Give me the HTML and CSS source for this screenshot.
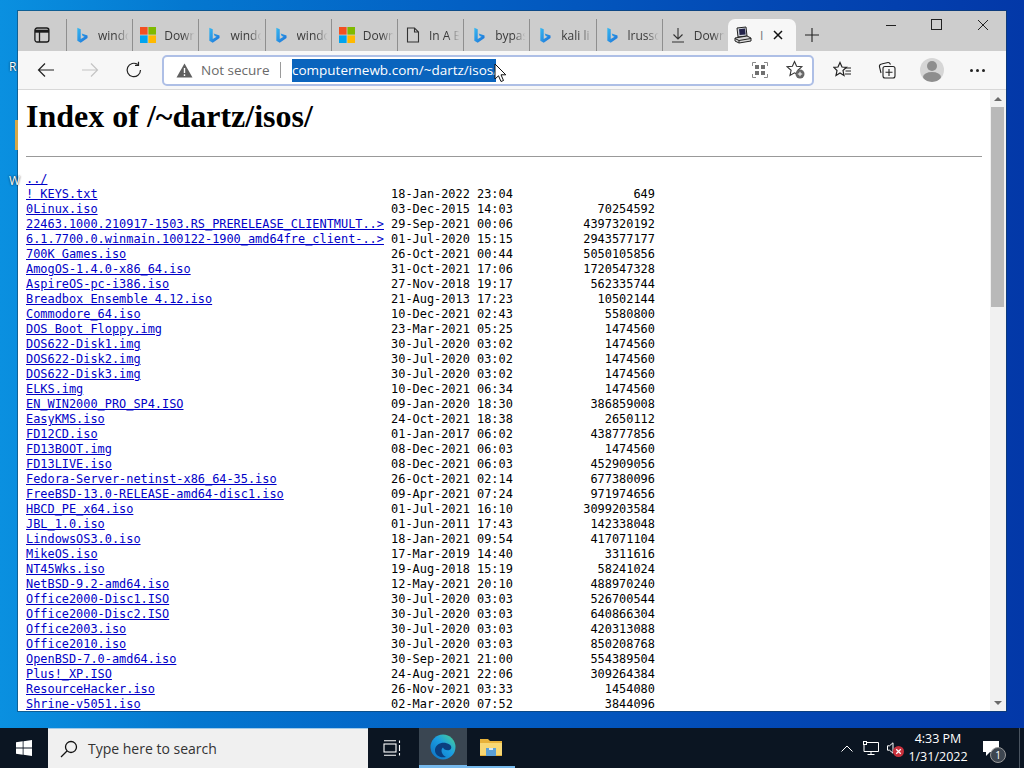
FILE: index.html
```html
<!DOCTYPE html>
<html lang="en">
<head>
<meta charset="utf-8">
<title>Index of /~dartz/isos/</title>
<link rel="stylesheet" href="styles.css">
</head>
<body>
<svg class="defs" width="0" height="0" aria-hidden="true">
  <defs>
    <linearGradient id="bingG" x1="0" y1="0" x2="1" y2="1"><stop offset="0" stop-color="#37b8f0"/><stop offset="1" stop-color="#1a6fd8"/></linearGradient>
    <linearGradient id="edgeG" x1="0" y1="1" x2="1" y2="0"><stop offset="0" stop-color="#0c6fc0"/><stop offset=".55" stop-color="#1b9de2"/><stop offset="1" stop-color="#4fd68a"/></linearGradient>
    <symbol id="bing" viewBox="0 0 16 20">
      <path d="M2.5 1 6.5 2.5V14L11 11.5 8.8 10.5 7.6 7.5 14.5 10V13L6.5 18.5 2.5 16.3Z" fill="url(#bingG)"/>
    </symbol>
    <symbol id="ms" viewBox="0 0 16 16">
      <rect width="7.6" height="7.6" fill="#f25022"/><rect x="8.4" width="7.6" height="7.6" fill="#7fba00"/>
      <rect y="8.4" width="7.6" height="7.6" fill="#00a4ef"/><rect x="8.4" y="8.4" width="7.6" height="7.6" fill="#ffb900"/>
    </symbol>
  </defs>
</svg>

<div class="desktop">
  <span class="deskicon deskicon-r">R</span>
  <span class="deskicon deskicon-w">W</span>
  <span class="deskfolder"></span>

  <div class="window">
    <div class="tabstrip">
      <div class="vtabs">
        <svg width="16" height="16" viewBox="0 0 16 16" fill="none" stroke="#1a1a1a" stroke-width="1.3"><rect x=".9" y="1" width="14" height="14" rx="2.2"/><path d="M1 4.2H15" stroke-width="3"/><path d="M5.5 5V15"/></svg>
      </div>
      <div class="tab"><svg class="fav" width="13" height="17"><use href="#bing"/></svg><span class="tab-label">windo</span></div>
      <div class="tab"><svg class="fav" width="16" height="16"><use href="#ms"/></svg><span class="tab-label">Down</span></div>
      <div class="tab"><svg class="fav" width="13" height="17"><use href="#bing"/></svg><span class="tab-label">windo</span></div>
      <div class="tab"><svg class="fav" width="13" height="17"><use href="#bing"/></svg><span class="tab-label">windo</span></div>
      <div class="tab"><svg class="fav" width="16" height="16"><use href="#ms"/></svg><span class="tab-label">Down</span></div>
      <div class="tab"><svg class="fav" width="13" height="16" viewBox="0 0 13 16" fill="none" stroke="#333" stroke-width="1.1"><path d="M1 1H8L12 5V15H1ZM8 1V5H12"/></svg><span class="tab-label">In A B</span></div>
      <div class="tab"><svg class="fav" width="13" height="17"><use href="#bing"/></svg><span class="tab-label">bypas</span></div>
      <div class="tab"><svg class="fav" width="13" height="17"><use href="#bing"/></svg><span class="tab-label">kali li</span></div>
      <div class="tab"><svg class="fav" width="13" height="17"><use href="#bing"/></svg><span class="tab-label">lrusso</span></div>
      <div class="tab"><svg class="fav" width="14" height="16" viewBox="0 0 14 16" fill="none" stroke="#333" stroke-width="1.1"><path d="M7 1V12M2.5 7.5 7 12l4.500-4.500M1 15H13"/></svg><span class="tab-label">Down</span></div>
      <div class="tab-active">
        <svg class="fav-pc" width="18" height="18" viewBox="0 0 18 18"><path d="M3 2 12 1 13 10 4 11Z" fill="#cfd3d8" stroke="#222"/><path d="M5 3.200 11 2.600 11.600 8.500 5.600 9Z" fill="#23234a"/><path d="M1 12 13 10 17 12 17 15 5 17 1 15Z" fill="#d8d8d8" stroke="#222"/><path d="M1 12.500 5 14.500 17 12.500M5 14.500V17" stroke="#222" fill="none"/></svg>
        <span class="tab-active-label">I</span>
        <svg class="tab-close" width="10" height="10" viewBox="0 0 10 10" stroke="#111" stroke-width="1.500"><path d="M1 1 9 9M9 1 1 9"/></svg>
      </div>
      <div class="newtab"><svg width="16" height="16" viewBox="0 0 16 16" stroke="#222" stroke-width="1.100"><path d="M8 1V15M1 8H15"/></svg></div>
      <div class="winctl">
        <svg width="12" height="12" viewBox="0 0 12 12" stroke="#222" stroke-width="1"><path d="M1 6.500H11"/></svg>
        <svg width="12" height="12" viewBox="0 0 12 12" fill="none" stroke="#222" stroke-width="1"><rect x=".5" y=".5" width="10" height="10"/></svg>
        <svg width="12" height="12" viewBox="0 0 12 12" stroke="#222" stroke-width="1"><path d="M1 1 11 11M11 1 1 11"/></svg>
      </div>
    </div>

    <div class="toolbar">
      <div class="navbtn nav-back"><svg width="18" height="16" viewBox="0 0 18 16" fill="none" stroke="#222" stroke-width="1.200"><path d="M17 8H1.500M8 1.500 1.500 8 8 14.500"/></svg></div>
      <div class="navbtn nav-fwd"><svg width="18" height="16" viewBox="0 0 18 16" fill="none" stroke="#c4c4c4" stroke-width="1.200"><path d="M1 8H16.500M10 1.500 16.500 8 10 14.500"/></svg></div>
      <div class="navbtn nav-reload"><svg width="18" height="18" viewBox="0 0 18 18" fill="none" stroke="#222" stroke-width="1.200"><path d="M15.500 9A6.700 6.700 0 1 1 12.800 3.600"/><path d="M13.500 .8V4.300H10"/></svg></div>
      <div class="omnibox">
        <svg class="warn" width="17" height="15" viewBox="0 0 17 15"><path d="M8.500 .5 16.500 14.500H.5Z" fill="#5f5f5f"/><path d="M8.500 5V10M8.500 11.300V13" stroke="#fff" stroke-width="1.400"/></svg>
        <span class="notsecure">Not secure</span>
        <span class="omnisep"></span>
        <span class="url">computernewb.com/~dartz/isos/</span>
        <svg class="omni-grid" width="16" height="16" viewBox="0 0 16 16" fill="#707070"><path d="M.5 4V.5H4M12 .5H15.500V4M15.500 12V15.500H12M4 15.500H.5V12" fill="none" stroke="#8a8a8a"/><rect x="3" y="3" width="4" height="4"/><rect x="9" y="3" width="4" height="4"/><rect x="3" y="9" width="4" height="4"/><rect x="9" y="9" width="4" height="4"/></svg>
        <svg class="omni-star" width="20" height="20" viewBox="0 0 20 20" fill="none"><path d="M8.500 1.500 10.600 6.300 15.800 6.800 11.900 10.300 13 15.400 8.500 12.800 4 15.400 5.100 10.300 1.200 6.800 6.400 6.300Z" stroke="#333" stroke-width="1.100"/><circle cx="14" cy="14" r="4.500" fill="#666"/><path d="M14 11.800V16.200M11.800 14H16.200" stroke="#fff"/></svg>
      </div>
      <div class="tool tool-fav"><svg width="20" height="18" viewBox="0 0 20 18" fill="none" stroke="#222" stroke-width="1.200"><path d="M7 1.500 9 6 13.500 6.300 10 9.500 11 14.500 7 12 3 14.500 4 9.500 .8 6.300 5 6Z"/><path d="M12 7H18M12.500 10H18M12 13H18" stroke-width="1"/></svg></div>
      <div class="tool tool-coll"><svg width="18" height="18" viewBox="0 0 18 18" fill="none" stroke="#222" stroke-width="1.100"><path d="M3 12 1.500 6Q1 3.500 3.500 3L10 1.500Q11.500 1.200 12.500 3.500"/><rect x="5" y="5.500" width="12" height="11.500" rx="2"/><path d="M11 8V15M7.500 11.300H14.500"/></svg></div>
      <div class="avatar"><span class="avatar-head"></span><span class="avatar-body"></span></div>
      <div class="dots"><i></i><i></i><i></i></div>
    </div>

    <div class="viewport">
      <main class="page">
        <h1>Index of /~dartz/isos/</h1>
        <hr>
        <div class="listing">
          <div class="row"><a href="#">../</a></div>
          <div class="row"><a href="#">! KEYS.txt</a><span>18-Jan-2022 23:04</span><span class="size">649</span></div>
          <div class="row"><a href="#">0Linux.iso</a><span>03-Dec-2015 14:03</span><span class="size">70254592</span></div>
          <div class="row"><a href="#">22463.1000.210917-1503.RS_PRERELEASE_CLIENTMULT..&gt;</a><span>29-Sep-2021 00:06</span><span class="size">4397320192</span></div>
          <div class="row"><a href="#">6.1.7700.0.winmain.100122-1900_amd64fre_client-..&gt;</a><span>01-Jul-2020 15:15</span><span class="size">2943577177</span></div>
          <div class="row"><a href="#">700K Games.iso</a><span>26-Oct-2021 00:44</span><span class="size">5050105856</span></div>
          <div class="row"><a href="#">AmogOS-1.4.0-x86_64.iso</a><span>31-Oct-2021 17:06</span><span class="size">1720547328</span></div>
          <div class="row"><a href="#">AspireOS-pc-i386.iso</a><span>27-Nov-2018 19:17</span><span class="size">562335744</span></div>
          <div class="row"><a href="#">Breadbox Ensemble 4.12.iso</a><span>21-Aug-2013 17:23</span><span class="size">10502144</span></div>
          <div class="row"><a href="#">Commodore_64.iso</a><span>10-Dec-2021 02:43</span><span class="size">5580800</span></div>
          <div class="row"><a href="#">DOS Boot Floppy.img</a><span>23-Mar-2021 05:25</span><span class="size">1474560</span></div>
          <div class="row"><a href="#">DOS622-Disk1.img</a><span>30-Jul-2020 03:02</span><span class="size">1474560</span></div>
          <div class="row"><a href="#">DOS622-Disk2.img</a><span>30-Jul-2020 03:02</span><span class="size">1474560</span></div>
          <div class="row"><a href="#">DOS622-Disk3.img</a><span>30-Jul-2020 03:02</span><span class="size">1474560</span></div>
          <div class="row"><a href="#">ELKS.img</a><span>10-Dec-2021 06:34</span><span class="size">1474560</span></div>
          <div class="row"><a href="#">EN_WIN2000_PRO_SP4.ISO</a><span>09-Jan-2020 18:30</span><span class="size">386859008</span></div>
          <div class="row"><a href="#">EasyKMS.iso</a><span>24-Oct-2021 18:38</span><span class="size">2650112</span></div>
          <div class="row"><a href="#">FD12CD.iso</a><span>01-Jan-2017 06:02</span><span class="size">438777856</span></div>
          <div class="row"><a href="#">FD13BOOT.img</a><span>08-Dec-2021 06:03</span><span class="size">1474560</span></div>
          <div class="row"><a href="#">FD13LIVE.iso</a><span>08-Dec-2021 06:03</span><span class="size">452909056</span></div>
          <div class="row"><a href="#">Fedora-Server-netinst-x86_64-35.iso</a><span>26-Oct-2021 02:14</span><span class="size">677380096</span></div>
          <div class="row"><a href="#">FreeBSD-13.0-RELEASE-amd64-disc1.iso</a><span>09-Apr-2021 07:24</span><span class="size">971974656</span></div>
          <div class="row"><a href="#">HBCD_PE_x64.iso</a><span>01-Jul-2021 16:10</span><span class="size">3099203584</span></div>
          <div class="row"><a href="#">JBL_1.0.iso</a><span>01-Jun-2011 17:43</span><span class="size">142338048</span></div>
          <div class="row"><a href="#">LindowsOS3.0.iso</a><span>18-Jan-2021 09:54</span><span class="size">417071104</span></div>
          <div class="row"><a href="#">MikeOS.iso</a><span>17-Mar-2019 14:40</span><span class="size">3311616</span></div>
          <div class="row"><a href="#">NT45Wks.iso</a><span>19-Aug-2018 15:19</span><span class="size">58241024</span></div>
          <div class="row"><a href="#">NetBSD-9.2-amd64.iso</a><span>12-May-2021 20:10</span><span class="size">488970240</span></div>
          <div class="row"><a href="#">Office2000-Disc1.ISO</a><span>30-Jul-2020 03:03</span><span class="size">526700544</span></div>
          <div class="row"><a href="#">Office2000-Disc2.ISO</a><span>30-Jul-2020 03:03</span><span class="size">640866304</span></div>
          <div class="row"><a href="#">Office2003.iso</a><span>30-Jul-2020 03:03</span><span class="size">420313088</span></div>
          <div class="row"><a href="#">Office2010.iso</a><span>30-Jul-2020 03:03</span><span class="size">850208768</span></div>
          <div class="row"><a href="#">OpenBSD-7.0-amd64.iso</a><span>30-Sep-2021 21:00</span><span class="size">554389504</span></div>
          <div class="row"><a href="#">Plus!_XP.ISO</a><span>24-Aug-2021 22:06</span><span class="size">309264384</span></div>
          <div class="row"><a href="#">ResourceHacker.iso</a><span>26-Nov-2021 03:33</span><span class="size">1454080</span></div>
          <div class="row"><a href="#">Shrine-v5051.iso</a><span>02-Mar-2020 07:52</span><span class="size">3844096</span></div>
        </div>
      </main>
      <div class="scrollbar">
        <div class="sb-arrow"><span class="sb-up"></span></div>
        <div class="sb-track"><div class="sb-thumb"></div></div>
        <div class="sb-arrow"><span class="sb-down"></span></div>
      </div>
    </div>
  </div>

  <svg class="pointer" width="13" height="20" viewBox="0 0 13 20"><path d="M1 1V16L4.500 12.800 7 18.500 9.500 17.500 7 11.800H11.800Z" fill="#fff" stroke="#111" stroke-width="1"/></svg>
</div>

<footer class="taskbar">
  <div class="start"><svg width="16" height="16" viewBox="0 0 16 16" fill="#fff"><path d="M0 2.300 6.700 1.300V7.500H0ZM7.500 1.200 16 0V7.500H7.500ZM0 8.400H6.700V14.700L0 13.700ZM7.500 8.400H16V16L7.500 14.800Z"/></svg></div>
  <div class="search">
    <svg width="18" height="18" viewBox="0 0 18 18" fill="none" stroke="#111" stroke-width="1.300"><circle cx="11" cy="7" r="5.500"/><path d="M7 11 1 17"/></svg>
    <span class="search-text">Type here to search</span>
  </div>
  <div class="taskview"><svg width="18" height="16" viewBox="0 0 18 16" fill="none" stroke="#fff" stroke-width="1.100"><rect x="1" y="4" width="12" height="8"/><path d="M1 .7H13M1 15.300H13M16.500 .5V3M16.500 5V11M16.500 13V15.500"/></svg></div>
  <div class="app app-edge"><svg width="26" height="26" viewBox="0 0 26 26"><circle cx="13" cy="13" r="12.500" fill="url(#edgeG)"/><path d="M5 15.500C6 9 14 7 19.500 10.500 22.500 12.500 21.500 16 18.500 16.200 15.500 16.400 13.500 15 13 13.500 10.500 15 11 20.500 16 23 10 24.500 4.500 21 5 15.500Z" fill="#0b3f7f"/></svg></div>
  <div class="app app-folder"><svg width="22" height="18" viewBox="0 0 22 18"><path d="M0 1H8L10 3H22V18H0Z" fill="#e8b23a"/><path d="M0 5H22V17H0Z" fill="#f7d774"/><rect x="6" y="10" width="10" height="8" fill="#5a9fd6"/><rect x="9" y="10" width="4" height="2" fill="#d8e9f5"/></svg></div>
  <div class="tray">
    <svg width="12" height="7" viewBox="0 0 12 7" fill="none" stroke="#fff" stroke-width="1"><path d="M.5 6.500 6 1 11.500 6.500"/></svg>
    <svg class="tray-net" width="16" height="14" viewBox="0 0 16 14" fill="none" stroke="#fff" stroke-width="1"><path d="M3.500 1.500H15.500V10.500H1V4"/><rect x=".5" y=".5" width="3" height="3"/><path d="M8 10.500V13M4.500 13.500H11.500"/></svg>
    <span class="tray-sound"><svg width="7" height="12" viewBox="0 0 7 12" fill="none" stroke="#fff" stroke-width="1"><path d="M.5 3.800H2.500L6 .8V11.200L2.500 8.200H.5Z"/></svg><span class="mute"><svg width="9" height="9" viewBox="0 0 10 10" stroke="#fff" stroke-width="1.400"><path d="M2.500 2.500 7.500 7.500M7.500 2.500 2.500 7.500"/></svg></span></span>
  </div>
  <div class="clock"><span>4:33 PM</span><span>1/31/2022</span></div>
  <div class="notify">
    <svg width="16" height="16" viewBox="0 0 16 16" fill="#fff"><path d="M0 0H16V11H7L3 15V11H0Z"/></svg>
    <span class="notify-badge">1</span>
  </div>
  <div class="showdesk"></div>
</footer>
</body>
</html>
```

FILE: styles.css
```css
* { box-sizing: border-box; }
html, body { margin: 0; padding: 0; }
body {
  width: 1024px;
  height: 768px;
  overflow: hidden;
  display: flex;
  flex-direction: column;
  font-family: "Open Sans", "Noto Sans", sans-serif;
  background: #0a1420;
}
.defs { position: absolute; }

.desktop {
  position: relative;
  height: 728px;
  padding: 11px 18px 17px;
  background: linear-gradient(90deg, #0a90e0 0%, #0478d0 18%, #0360c4 45%, #0348b4 75%, #0338a8 100%);
}
.deskicon {
  position: absolute;
  left: 9px;
  color: #fff;
  font: 12px "Open Sans", sans-serif;
  text-shadow: 0 0 2px #000;
}
.deskicon-r { top: 58px; }
.deskicon-w { top: 172px; }
.deskfolder {
  position: absolute;
  left: 15px;
  top: 120px;
  width: 3px;
  height: 30px;
  background: #d6a848;
}

.window {
  height: 700px;
  display: flex;
  flex-direction: column;
  background: #fff;
  box-shadow: 0 0 0 1px rgba(20, 60, 90, .55);
}

/* tab strip */
.tabstrip {
  height: 40px;
  flex: none;
  display: flex;
  align-items: flex-end;
  background: #cdcdcd;
}
.vtabs {
  flex: none;
  width: 48px;
  height: 32px;
  display: flex;
  align-items: center;
  justify-content: center;
}
.tab {
  flex: none;
  width: 66.2px;
  height: 32px;
  display: flex;
  align-items: center;
  padding-left: 7px;
  border-left: 1px solid #8f8f8f;
  background-clip: padding-box;
}
.fav { flex: none; width: 16px; }
.tab-label {
  margin-left: 8px;
  flex: 1;
  min-width: 0;
  white-space: nowrap;
  font-size: 12px;
  color: #3a3a3a;
  -webkit-mask-image: linear-gradient(90deg, #000 55%, transparent 90%);
  mask-image: linear-gradient(90deg, #000 55%, transparent 90%);
}
.tab-active {
  flex: none;
  width: 68px;
  height: 32px;
  display: flex;
  align-items: center;
  padding-left: 6px;
  background: #f7f7f7;
  border-radius: 7px 7px 0 0;
}
.fav-pc { flex: none; }
.tab-active-label {
  width: 8px;
  margin-left: 8px;
  font-size: 12px;
  color: #777;
}
.tab-close { margin-left: 5px; flex: none; }
.newtab {
  flex: none;
  width: 32px;
  height: 32px;
  display: flex;
  align-items: center;
  justify-content: center;
}
.winctl {
  flex: 1;
  align-self: flex-start;
  height: 28px;
  display: flex;
  align-items: center;
  padding: 0 17px 0 57px;
  justify-content: space-between;
}

/* toolbar */
.toolbar {
  height: 39px;
  flex: none;
  display: flex;
  align-items: center;
  background: #f7f7f7;
  border-bottom: 1px solid #d8d8d8;
}
.navbtn {
  flex: none;
  width: 44px;
  display: flex;
  justify-content: center;
}
.nav-back { margin-left: 6px; }
.omnibox {
  flex: none;
  width: 652px;
  height: 31px;
  margin-left: 6px;
  display: flex;
  align-items: center;
  padding-left: 12px;
  background: #fff;
  border: 2px solid #aebfe6;
  border-radius: 5px;
}
.warn { flex: none; }
.notsecure {
  margin-left: 8px;
  font-size: 13.5px;
  color: #6a6a6a;
  width: 68px;
  white-space: nowrap;
}
.omnisep {
  width: 1px;
  height: 16px;
  margin-left: 11px;
  background: #9a9a9a;
}
.url {
  margin-left: 11px;
  height: 23px;
  line-height: 22px;
  font-size: 13.5px;
  color: #fff;
  background: #0a64bd;
  white-space: nowrap;
  width: 204px;
}
.omni-grid { margin-left: auto; }
.omni-star { margin-left: 18px; margin-right: 6px; }
.tool { flex: none; display: flex; justify-content: center; width: 44px; }
.tool-fav { margin-left: 7px; }
.avatar {
  flex: none;
  width: 24px;
  height: 24px;
  margin-left: 11px;
  border-radius: 50%;
  background: #d6d6d6;
  position: relative;
  overflow: hidden;
}
.avatar-head {
  position: absolute;
  left: 7px;
  top: 3px;
  width: 10px;
  height: 10px;
  border-radius: 50%;
  background: #8e8e8e;
}
.avatar-body {
  position: absolute;
  left: 3px;
  top: 14px;
  width: 18px;
  height: 10px;
  border-radius: 50%;
  background: #8e8e8e;
}
.dots {
  margin-left: 26px;
  display: flex;
  gap: 3px;
}
.dots i {
  width: 3px;
  height: 3px;
  border-radius: 50%;
  background: #222;
}

/* page */
.viewport {
  flex: 1;
  min-height: 0;
  display: flex;
}
.page {
  flex: 1;
  min-width: 0;
  padding: 0 8px;
  overflow: hidden;
  color: #000;
  background: #fff;
}
.page h1 {
  margin: 8px 0 0;
  font: bold 32px/37px "Liberation Serif", serif;
}
.page hr {
  margin: 21px 0 0;
  height: 1px;
  border: 0;
  background: #999;
}
.listing {
  margin-top: 15px;
  font: 11.9px/15px "DejaVu Sans Mono", monospace;
}
.row {
  display: grid;
  grid-template-columns: 51ch 17ch 19.85ch;
  height: 15px;
  white-space: pre;
}
.row a { color: #0000c8; text-decoration: underline; }
.size { text-align: right; }

.scrollbar {
  width: 16px;
  flex: none;
  display: flex;
  flex-direction: column;
  background: #f1f1f1;
}
.sb-arrow {
  height: 17px;
  flex: none;
  display: flex;
  align-items: center;
  justify-content: center;
}
.sb-up, .sb-down {
  width: 0;
  height: 0;
  border-left: 4px solid transparent;
  border-right: 4px solid transparent;
}
.sb-up { border-bottom: 4px solid #6a6a6a; }
.sb-down { border-top: 4px solid #6a6a6a; }
.sb-track { flex: 1; padding: 0 2px 0 1px; }
.sb-thumb { height: 200px; background: #b9b9b9; }

.pointer { position: absolute; left: 494px; top: 63px; }

/* taskbar */
.taskbar {
  height: 40px;
  flex: none;
  display: flex;
  align-items: center;
  background: #0b1522;
  color: #fff;
}
.start {
  flex: none;
  width: 48px;
  height: 40px;
  display: flex;
  align-items: center;
  justify-content: center;
}
.search {
  flex: none;
  width: 320px;
  height: 40px;
  display: flex;
  align-items: center;
  padding-left: 12px;
  background: #f0f0f0;
  border-top: 1px solid #9fc9e8;
}
.search-text {
  margin-left: 10px;
  font-size: 14px;
  color: #333;
  white-space: nowrap;
}
.taskview { flex: none; width: 48px; display: flex; justify-content: center; }
.app {
  flex: none;
  width: 48px;
  height: 40px;
  display: flex;
  align-items: center;
  justify-content: center;
  border-bottom: 3px solid #76b9ed;
}
.app-edge { margin-left: 3px; background: #3a4652; }
.app-folder { border-bottom-width: 2px; }
.tray {
  flex: none;
  margin-left: 326px;
  display: flex;
  align-items: center;
  gap: 10px;
}
.tray-sound { position: relative; display: flex; width: 11px; margin-left: -2px; }
.mute {
  position: absolute;
  left: 6px;
  top: 4px;
  width: 11px;
  height: 11px;
  border-radius: 50%;
  background: #c8303c;
  display: flex;
  align-items: center;
  justify-content: center;
}
.clock {
  flex: none;
  width: 76px;
  margin-left: 2px;
  display: flex;
  flex-direction: column;
  align-items: center;
  font-size: 12.5px;
  line-height: 18px;
}
.notify {
  flex: none;
  position: relative;
  margin-left: 7px;
  width: 24px;
  height: 24px;
  padding-top: 4px;
}
.notify-badge {
  position: absolute;
  left: 7px;
  top: 11px;
  width: 16px;
  height: 16px;
  border-radius: 50%;
  background: #3e4650;
  border: 1px solid #9a9a9a;
  font-size: 10px;
  line-height: 14px;
  text-align: center;
}
.showdesk {
  width: 1px;
  height: 40px;
  margin-left: auto;
  margin-right: 4px;
  background: #4a5460;
}
```
